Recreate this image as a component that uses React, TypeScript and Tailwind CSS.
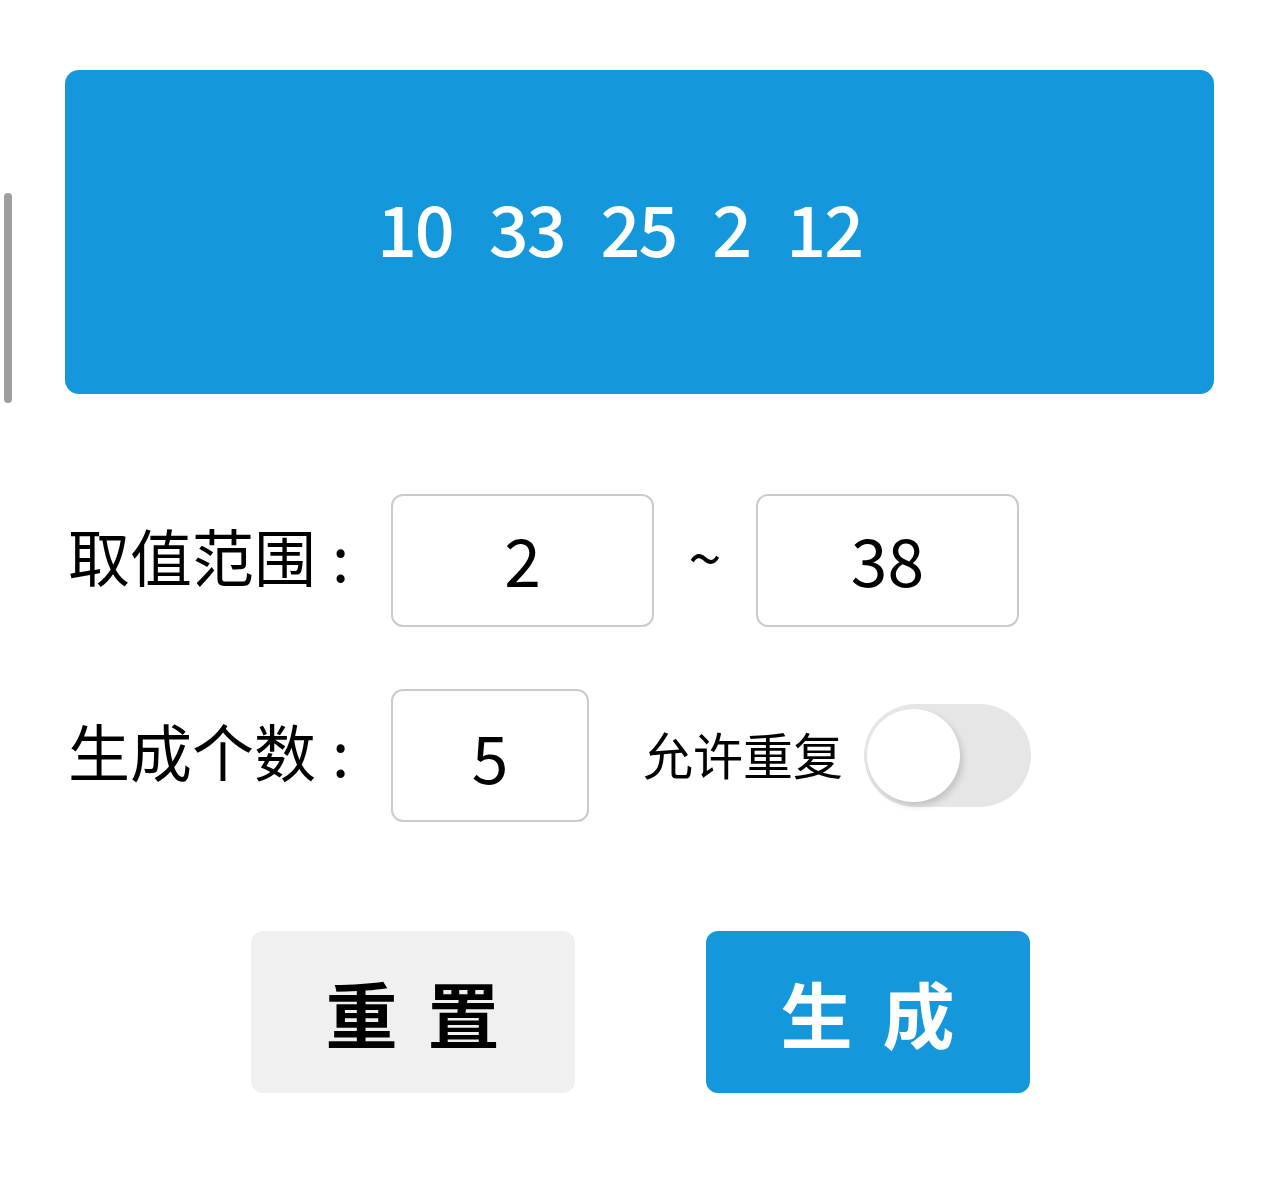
import React from "react";

export default function App() {
  const nums = [10, 33, 25, 2, 12];
  return (
    <div
      className="relative w-[1280px] h-[1187px] bg-white overflow-hidden"
      style={{ fontFamily: '"Noto Sans CJK SC", "Noto Sans", sans-serif' }}
    >
      {/* scroll indicator */}
      <div className="absolute left-[4px] top-[193px] w-[8px] h-[210px] rounded-full bg-[#9e9e9e]" />

      <div className="pl-[65px] pr-[66px] pt-[70px]">
        {/* result card */}
        <div className="h-[324px] rounded-[14px] bg-[#1597db] flex items-center justify-center pb-[10px] pr-[40px]">
          <div className="flex gap-[36px] text-white text-[70px] font-medium leading-none tracking-[-2px]">
            {nums.map((n, i) => (
              <span key={i}>{n}</span>
            ))}
          </div>
        </div>

        {/* range row */}
        <div className="mt-[100px] flex items-center h-[133px] pl-[3px] text-black">
          <div className="w-[323px] text-[62px] leading-none -mt-[12px]">
            取值范围<span className="ml-[16px]">:</span>
          </div>
          <div className="w-[263px] h-[133px] rounded-[12px] border-2 border-[#cbcbcb] flex items-center justify-center text-[66px] leading-none pb-[6px]">
            2
          </div>
          <div className="w-[102px] flex justify-center text-[60px] leading-none -mt-[12px]">~</div>
          <div className="w-[263px] h-[133px] rounded-[12px] border-2 border-[#cbcbcb] flex items-center justify-center text-[66px] leading-none pb-[6px]">
            38
          </div>
        </div>

        {/* count row */}
        <div className="mt-[62px] flex items-center h-[133px] pl-[3px] text-black">
          <div className="w-[323px] text-[62px] leading-none -mt-[12px]">
            生成个数<span className="ml-[16px]">:</span>
          </div>
          <div className="w-[198px] h-[133px] rounded-[12px] border-2 border-[#cbcbcb] flex items-center justify-center text-[66px] leading-none pb-[2px]">
            5
          </div>
          <div className="ml-[54px] text-[50px] leading-none -mt-[6px]">允许重复</div>
          <div className="ml-[21px] w-[167px] h-[103px] rounded-full bg-[#e6e6e6] relative">
            <div className="absolute left-[3px] top-[5px] w-[93px] h-[93px] rounded-full bg-white shadow-[3px_4px_6px_rgba(0,0,0,0.15)]" />
          </div>
        </div>
      </div>

      {/* buttons */}
      <div className="mt-[109px] flex justify-center gap-[131px]">
        <button className="w-[324px] h-[162px] rounded-[12px] bg-[#f0f0f0] text-black text-[72px] font-bold leading-none tracking-[30px] pl-[30px] flex items-center justify-center">
          重置
        </button>
        <button className="w-[324px] h-[162px] rounded-[12px] bg-[#1597db] text-white text-[72px] font-bold leading-none tracking-[30px] pl-[30px] flex items-center justify-center">
          生成
        </button>
      </div>
    </div>
  );
}
